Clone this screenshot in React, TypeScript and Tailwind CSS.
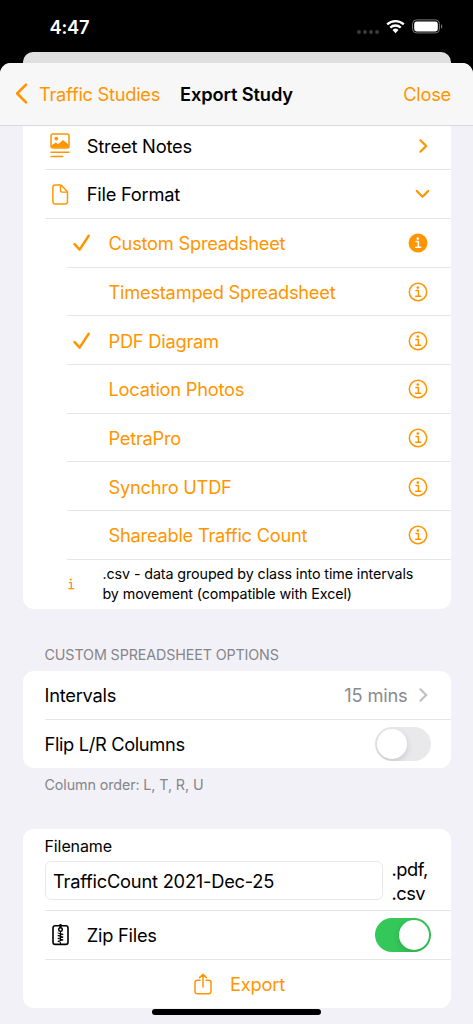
import { useState, type ReactNode } from 'react';
import clsx from 'clsx';

interface FormatOption {
  label: string;
  checked?: boolean;
  active?: boolean;
}

const FORMATS: FormatOption[] = [
  { label: 'Custom Spreadsheet', checked: true, active: true },
  { label: 'Timestamped Spreadsheet' },
  { label: 'PDF Diagram', checked: true },
  { label: 'Location Photos' },
  { label: 'PetraPro' },
  { label: 'Synchro UTDF' },
  { label: 'Shareable Traffic Count' },
];

function Chevron({ className }: { className?: string }) {
  return (
    <svg width="9" height="14" viewBox="0 0 9 14" fill="none" className={className}>
      <path d="M1.4 1.3 7.2 7l-5.8 5.7" stroke="currentColor" strokeWidth="2.2" strokeLinecap="round" strokeLinejoin="round" />
    </svg>
  );
}

function InfoIcon({ filled }: { filled?: boolean }) {
  const mark = filled ? '#fff' : 'currentColor';
  return (
    <svg width="20" height="20" viewBox="0 0 20 20" fill="none">
      <circle cx="10" cy="10" r="8.7" stroke="currentColor" strokeWidth="1.5" fill={filled ? 'currentColor' : 'none'} />
      <circle cx="9.8" cy="5.6" r="1.3" fill={mark} />
      <path d="M8 8.5h2.4v5.6M7.7 14.3h5" stroke={mark} strokeWidth="1.5" strokeLinecap="round" strokeLinejoin="round" />
    </svg>
  );
}

function CheckIcon() {
  return (
    <svg width="18" height="18" viewBox="0 0 18 18" fill="none">
      <path d="M1.6 10.2 6.6 15.6 15.7 1.8" stroke="currentColor" strokeWidth="2.5" strokeLinecap="round" strokeLinejoin="round" />
    </svg>
  );
}

function NotesIcon() {
  return (
    <svg width="20" height="25" viewBox="0 0 20 25" fill="none">
      <rect x="1" y="1" width="18" height="14" rx="2" stroke="currentColor" strokeWidth="1.5" />
      <circle cx="6.3" cy="5.6" r="1.9" fill="currentColor" />
      <path d="M1.5 12.2 5.8 9.4l2.2 1.8L13 7l5.6 4.6v3H1.6Z" fill="currentColor" />
      <path d="M1 19.2h18M1 23.5h11.8" stroke="currentColor" strokeWidth="1.5" strokeLinecap="round" />
    </svg>
  );
}

function FileIcon() {
  return (
    <svg width="17" height="21" viewBox="0 0 17 21" fill="none">
      <path
        d="M3.2 1h5c.7 0 1.1.2 1.6.7l5 5.2c.5.5.7.9.7 1.6v9.1c0 1.6-.8 2.4-2.4 2.4H3.2C1.7 20 .9 19.2.9 17.6V3.4C.9 1.800 1.700 1 3.200 1Z"
        stroke="currentColor"
        strokeWidth="1.5"
      />
      <path d="M8.500 1.300v5.500c0 .9.500 1.300 1.300 1.300h5.400" stroke="currentColor" strokeWidth="1.4" />
    </svg>
  );
}

function ZipIcon() {
  return (
    <svg width="17" height="22" viewBox="0 0 17 22" fill="none">
      <rect x="1" y="1.8" width="15" height="18.6" rx="2.2" stroke="currentColor" strokeWidth="1.6" />
      <path d="M8.5 0v4" stroke="currentColor" strokeWidth="2" />
      <circle cx="8.5" cy="5.6" r="1.8" stroke="currentColor" strokeWidth="1.4" fill="#fff" />
      <path
        d="M5.6 9 11.2 10.3 5.8 11.7 11.2 13.1 5.8 14.5 11.2 15.9 5.8 17.3 8.5 18.2V20M8.5 7.5V17"
        stroke="currentColor"
        strokeLinejoin="round"
      />
    </svg>
  );
}

function ShareIcon() {
  return (
    <svg width="18" height="22" viewBox="0 0 18 22" fill="none">
      <path
        d="M6 7.2H3.4C1.8 7.2 1 8 1 9.5v8.9c0 1.5.8 2.3 2.4 2.3h11.2c1.6 0 2.4-.8 2.4-2.3V9.5c0-1.5-.8-2.3-2.4-2.3H12M9 14V1.3M5.6 4.6 9 1.2l3.4 3.4"
        stroke="currentColor"
        strokeWidth="1.5"
        strokeLinecap="round"
        strokeLinejoin="round"
      />
    </svg>
  );
}

function Toggle({ on, onChange }: { on: boolean; onChange: (on: boolean) => void }) {
  return (
    <button
      type="button"
      role="switch"
      aria-checked={on}
      onClick={() => onChange(!on)}
      className={clsx(
        'flex h-[34px] w-[56.5px] items-center overflow-hidden rounded-full p-[2px]',
        on ? 'justify-end bg-[#34c759]' : 'justify-start bg-[#e9e9eb]',
      )}
    >
      <span className="size-[30px] rounded-full bg-white shadow-[0_3px_7px_rgba(0,0,0,0.14)]" />
    </button>
  );
}

function Card({ children, className }: { children: ReactNode; className?: string }) {
  return <section className={clsx('mr-[22px] ml-[22.5px] bg-white', className)}>{children}</section>;
}

function StatusBar() {
  return (
    <div className="flex h-[52px] shrink-0 items-start justify-between pr-[30px] pl-[49.5px] text-white">
      <span className="mt-[13px] text-[18.3px] leading-7 font-semibold tracking-[-0.2px]">4:47</span>
      <div className="mt-[19px] flex items-start">
        <svg width="22" height="15" viewBox="0 0 22 15" fill="#3d3d3f" className="mr-[7px]">
          <circle cx="2" cy="13" r="1.9" />
          <circle cx="8" cy="13" r="1.9" />
          <circle cx="14" cy="13" r="1.9" />
          <circle cx="20" cy="13" r="1.9" />
        </svg>
        <svg width="19" height="15" viewBox="0 0 19 15" fill="none" className="mr-[7px]">
          <path d="M1.2 5.4a12 12 0 0 1 16.6 0M4.3 8.6a7.5 7.5 0 0 1 10.4 0" stroke="#fff" strokeWidth="2.3" />
          <path d="M6.5 11a4.3 4.3 0 0 1 6 0l-3 3.2Z" fill="#fff" />
        </svg>
        <svg width="31" height="15" viewBox="0 0 31 15" fill="none">
          <rect x=".6" y=".9" width="26.8" height="13" rx="3.8" stroke="#77777a" />
          <rect x="2.2" y="2.5" width="23.6" height="9.9" rx="2.4" fill="#fff" />
          <path d="M29 5.2c1.7.6 1.7 3.8 0 4.4Z" fill="#77777a" />
        </svg>
      </div>
    </div>
  );
}

function NavBar() {
  return (
    <header className="flex h-[62.5px] shrink-0 items-center rounded-t-[11px] border-b border-[#d9d9dc] bg-[#f7f7f7] pr-[22px] pl-[15px] text-[#ff9500]">
      <svg width="13" height="21" viewBox="0 0 13 21" fill="none" className="mr-[11px]">
        <path d="M11 1.6 2.2 10.5l8.8 8.9" stroke="currentColor" strokeWidth="2.6" strokeLinecap="round" strokeLinejoin="round" />
      </svg>
      <span className="w-[141px] tracking-[-0.27px]">Traffic Studies</span>
      <h1 className="flex-1 font-semibold tracking-[-0.13px] text-black">Export Study</h1>
      <span>Close</span>
    </header>
  );
}

export default function App() {
  const [flip, setFlip] = useState(false);
  const [zip, setZip] = useState(true);

  return (
    <div className="flex h-[1024px] w-[473px] flex-col overflow-hidden bg-black font-['Inter',sans-serif] text-[18.3px] leading-6 tracking-[-0.25px] whitespace-nowrap text-black">
      <StatusBar />
      <div className="mx-[22.5px] h-[21px] shrink-0 rounded-t-[10px] bg-[#dfdfdf]" />
      <div className="relative -mt-[10px] flex flex-1 flex-col rounded-t-[11px] bg-[#f2f1f7]">
        <NavBar />

        <Card className="rounded-b-[11px] pl-[22px]">
          <div className="flex h-[44.9px] items-center border-b border-[#e5e5e7] pr-[23px] pb-[3px]">
            <span className="flex w-[42.3px] pl-[5.5px] text-[#ff9500]"><NotesIcon /></span>
            <span className="flex-1 tracking-[-0.2px]">Street Notes</span>
            <Chevron className="text-[#ff9500]" />
          </div>
          <div className="flex h-[48.67px] items-center border-b border-[#e5e5e7] pr-[24.5px]">
            <span className="flex w-[42.3px] pl-[7.5px] text-[#ff9500]"><FileIcon /></span>
            <span className="flex-1">File Format</span>
            <Chevron className="rotate-90 text-[#ff9500]" />
          </div>
          <div className="pl-[22px] text-[#ff9500]">
            {FORMATS.map((format) => (
              <div key={format.label} className="flex h-[48.67px] items-center border-b border-[#e5e5e7] pt-px pr-[23.5px]">
                <span className="w-[42px] pl-[6.5px]">{format.checked && <CheckIcon />}</span>
                <span className="flex-1">{format.label}</span>
                <InfoIcon filled={format.active} />
              </div>
            ))}
            <div className="flex h-[49.6px] items-center">
              <svg width="8" height="12" viewBox="0 0 8 12" fill="none" className="mr-[28px]">
                <circle cx="3.8" cy="1.5" r="1.1" fill="currentColor" />
                <path d="M1.8 4.7h2.5v5.7M1.2 10.7h5.8" stroke="currentColor" strokeWidth="1.3" />
              </svg>
              <p className="text-[14.3px] leading-5 tracking-[-0.1px] text-black">
                <span className="block">.csv - data grouped by class into time intervals</span>
                <span className="block">by movement (compatible with Excel)</span>
              </p>
            </div>
          </div>
        </Card>

        <h2 className="mt-[35.8px] mb-[6px] pl-[44.5px] text-[14.3px] leading-5 tracking-[-0.12px] text-[#85858a]">CUSTOM SPREADSHEET OPTIONS</h2>
        <Card className="rounded-[11px] pl-[22px]">
          <div className="flex h-[49px] items-center border-b border-[#e5e5e7] pr-[23px]">
            <span className="flex-1">Intervals</span>
            <span className="mr-[11.5px] tracking-[-0.2px] text-[#8a8a8e]">15 mins</span>
            <Chevron className="text-[#bfbfc2]" />
          </div>
          <div className="flex h-[48px] items-center pr-[20px]">
            <span className="flex-1 tracking-[-0.35px]">Flip L/R Columns</span>
            <Toggle on={flip} onChange={setFlip} />
          </div>
        </Card>
        <p className="mt-[7px] pl-[44.5px] text-[14.3px] leading-5 tracking-[-0.1px] text-[#85858a]">Column order: L, T, R, U</p>

        <Card className="mt-[34px] rounded-[11px] pl-[22px]">
          <div className="flex h-[82px] items-end border-b border-[#e5e5e7]">
            <div className="w-[338px] pb-[10px]">
              <label className="block pb-[5px] text-[16px] leading-5 tracking-[-0.1px]">Filename</label>
              <div className="flex h-[39px] items-center rounded-[6px] border border-[#e8e8ea] px-[7.5px] tracking-[-0.23px]">TrafficCount 2021-Dec-25</div>
            </div>
            <div className="pb-[5px] pl-[9px] tracking-[-0.5px]">
              <span className="block">.pdf,</span>
              <span className="block">.csv</span>
            </div>
          </div>
          <div className="flex h-[48.5px] items-center border-b border-[#e5e5e7] pr-[20px]">
            <span className="flex w-[42.3px] pl-[7px]"><ZipIcon /></span>
            <span className="flex-1">Zip Files</span>
            <Toggle on={zip} onChange={setZip} />
          </div>
          <button type="button" className="flex h-[48px] w-full items-center pl-[149.5px] text-[#ff9500]">
            <ShareIcon />
            <span className="ml-[18px] tracking-[-0.2px]">Export</span>
          </button>
        </Card>
        <div className="mt-[1.5px] ml-[152px] h-[6px] w-[169px] shrink-0 rounded-full bg-black" />
      </div>
    </div>
  );
}
